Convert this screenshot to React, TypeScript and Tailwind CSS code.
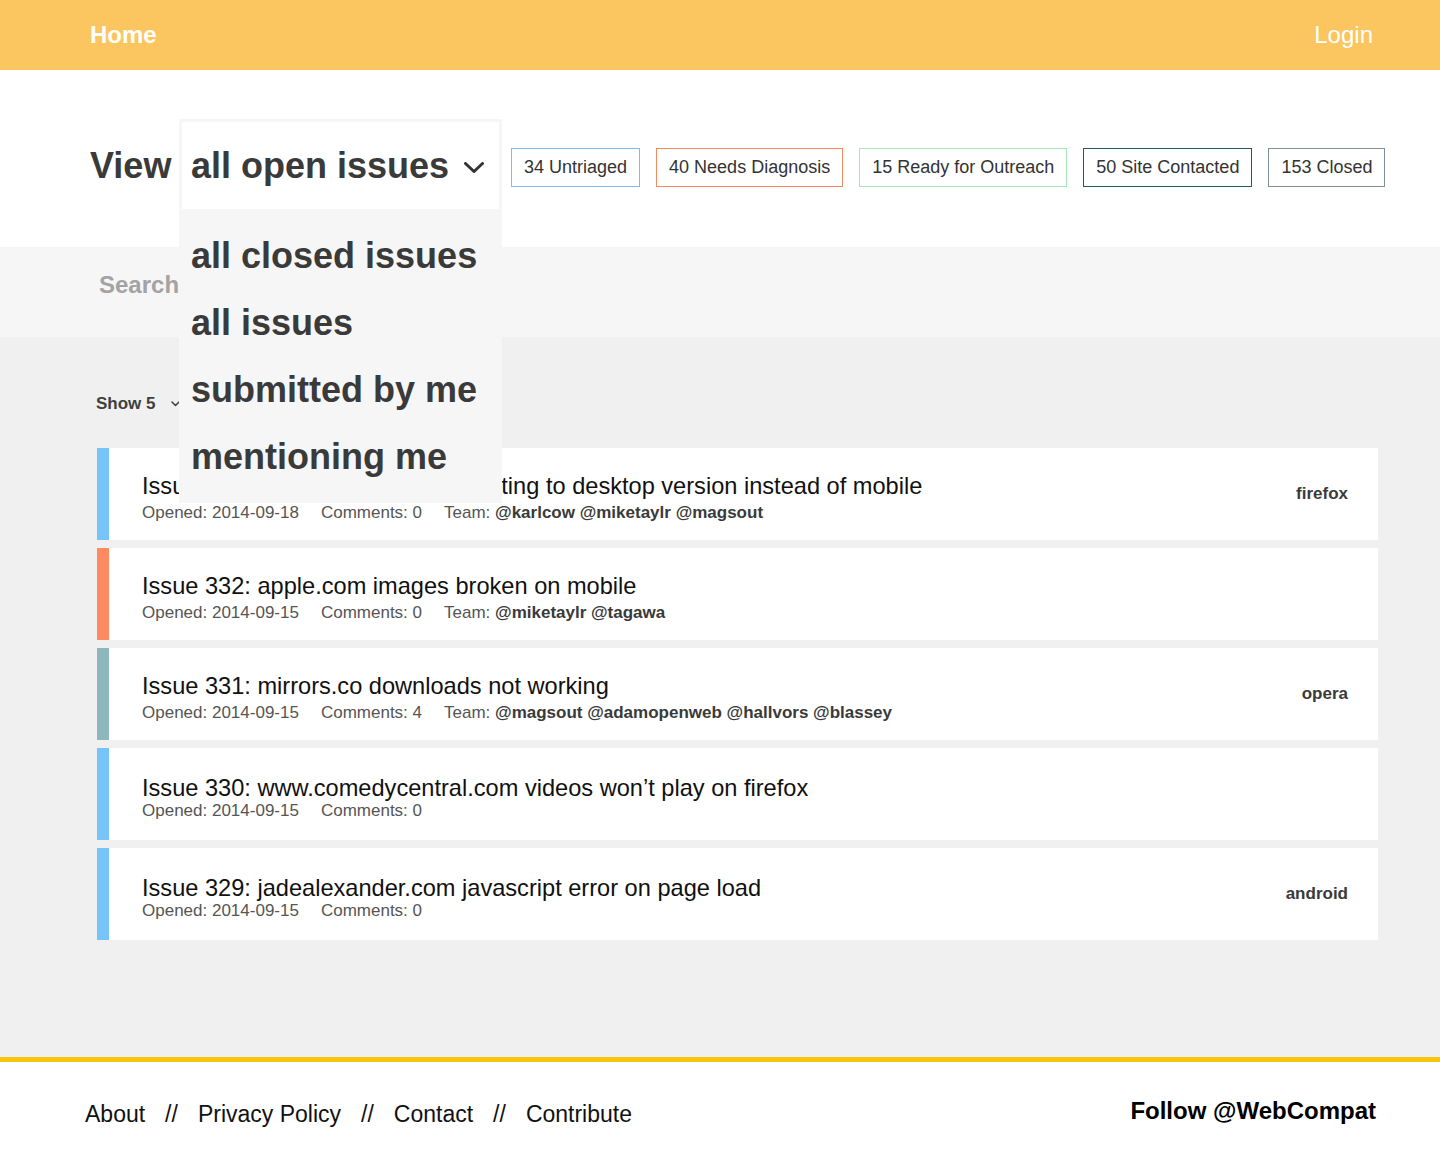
import React from "react";

const labels = [
  { text: "34 Untriaged", border: "border-[#74c0f5]" },
  { text: "40 Needs Diagnosis", border: "border-[#f68a5c]" },
  { text: "15 Ready for Outreach", border: "border-[#a6e6b6]" },
  { text: "50 Site Contacted", border: "border-[#1c5f63]" },
  { text: "153 Closed", border: "border-[#7d8f99]" },
];

type Issue = {
  title: string;
  opened: string;
  comments: number;
  team?: string;
  label?: string;
  bar: string;
};

const issues: Issue[] = [
  {
    title: "Issue 333: m.yahoo.com is redirecting to desktop version instead of mobile",
    opened: "2014-09-18",
    comments: 0,
    team: "@karlcow @miketaylr @magsout",
    label: "firefox",
    bar: "bg-[#76c4fa]",
  },
  {
    title: "Issue 332: apple.com images broken on mobile",
    opened: "2014-09-15",
    comments: 0,
    team: "@miketaylr @tagawa",
    bar: "bg-[#fd8a61]",
  },
  {
    title: "Issue 331: mirrors.co downloads not working",
    opened: "2014-09-15",
    comments: 4,
    team: "@magsout @adamopenweb @hallvors @blassey",
    label: "opera",
    bar: "bg-[#8cb8bb]",
  },
  {
    title: "Issue 330: www.comedycentral.com videos won\u2019t play on firefox",
    opened: "2014-09-15",
    comments: 0,
    bar: "bg-[#76c4fa]",
  },
  {
    title: "Issue 329: jadealexander.com javascript error on page load",
    opened: "2014-09-15",
    comments: 0,
    label: "android",
    bar: "bg-[#76c4fa]",
  },
];

function Chevron({ className }: { className?: string }) {
  return (
    <svg className={className} viewBox="0 0 20 11" fill="none">
      <polyline points="1.5,1.5 10,9.5 18.5,1.5" stroke="#333" strokeWidth="3" strokeLinecap="round" strokeLinejoin="round" />
    </svg>
  );
}

export default function App() {
  return (
    <div className="w-[1440px] min-h-[1173px] font-['Liberation_Sans',Arial,sans-serif] text-[#333] bg-white">
      {/* Header */}
      <header className="h-[70px] bg-[#fbc660] flex items-center justify-between pl-[90px] pr-[67px] text-white text-[24px]">
        <span className="font-bold">Home</span>
        <span>Login</span>
      </header>

      {/* View row */}
      <section className="h-[177px] pt-[49px] pl-[90px]">
        <div className="flex items-center">
          <span className="text-[36px] font-bold text-[#3a3a3a] w-[89px]">View</span>
          <div className="relative z-20">
            <div className="w-[323px] h-[93px] bg-[#f6f6f6] p-[3px]">
              <div className="h-full bg-white flex items-center pl-[9px]">
                <span className="text-[36px] font-bold text-[#3a3a3a]">all open issues</span>
                <Chevron className="w-[20px] h-[11px] ml-[15px] mt-[3px]" />
              </div>
            </div>
            <div className="absolute left-0 top-full w-[323px] h-[291px] bg-[#f6f6f6] pt-[10px] pl-[12px]">
              {["all closed issues", "all issues", "submitted by me", "mentioning me"].map((t) => (
                <div key={t} className="text-[36px] font-bold leading-[67px] text-[#3a3a3a] whitespace-nowrap">
                  {t}
                </div>
              ))}
            </div>
          </div>
          <div className="flex items-center gap-4 ml-[9px] mt-[3px]">
            {labels.map((l) => (
              <div
                key={l.text}
                className={`h-[39px] px-3 border ${l.border} flex items-center text-[18px] text-[#333] whitespace-nowrap`}
              >
                {l.text}
              </div>
            ))}
          </div>
        </div>
      </section>

      {/* Search */}
      <section className="h-[90px] bg-[#f6f6f6] flex items-center pl-[99px] pb-[14px]">
        <span className="text-[24px] font-bold text-[#a3a3a3]">Search</span>
      </section>

      {/* Issues */}
      <main className="bg-[#f0f0f0] h-[720px] pl-[97px] pr-[62px] pt-[55px]">
        <div className="flex items-center h-[24px] text-[17px] font-bold text-[#3f3f3f] -ml-[1px]">
          <span>Show 5</span>
          <svg className="w-[9px] h-[6px] ml-[15px]" viewBox="0 0 9 6" fill="none">
            <polyline points="1,1 4.5,4.5 8,1" stroke="#444" strokeWidth="1.6" strokeLinecap="round" strokeLinejoin="round" />
          </svg>
        </div>
        <div className="mt-[32px] flex flex-col gap-[8px]">
          {issues.map((is) => (
            <div key={is.title} className="h-[92px] bg-white flex">
              <div className={`w-[12px] ${is.bar}`} />
              <div className="flex-1 flex items-center pl-[33px] pr-[30px]">
                <div className="flex-1 mt-[8px]">
                  <div className={`text-[23.6px] text-[#111] ${is.team ? "leading-[30px]" : "leading-[26px]"} whitespace-nowrap`}>
                    {is.title}
                  </div>
                  <div className={`text-[17px] text-[#555] ${is.team ? "leading-[24px]" : "leading-[20px]"} flex`}>
                    <span className="mr-[22px]">Opened: {is.opened}</span>
                    <span className="mr-[22px]">Comments: {is.comments}</span>
                    {is.team && (
                      <span>
                        Team: <b className="font-bold text-[#3a3a3a]">{is.team}</b>
                      </span>
                    )}
                  </div>
                </div>
                {is.label && <span className="text-[17px] font-bold text-[#3a3a3a]">{is.label}</span>}
              </div>
            </div>
          ))}
        </div>
      </main>

      {/* Footer */}
      <footer className="border-t-[5px] border-[#f8c40c] h-[116px] flex items-center justify-between pl-[85px] pr-[64px] pb-[14px]">
        <div className="flex items-center text-[23px] text-[#111] mt-[8px]">
          <span>About</span>
          <span className="mx-[20px]">//</span>
          <span>Privacy Policy</span>
          <span className="mx-[20px]">//</span>
          <span>Contact</span>
          <span className="mx-[20px]">//</span>
          <span>Contribute</span>
        </div>
        <span className="text-[24px] font-bold text-black">Follow @WebCompat</span>
      </footer>
    </div>
  );
}
